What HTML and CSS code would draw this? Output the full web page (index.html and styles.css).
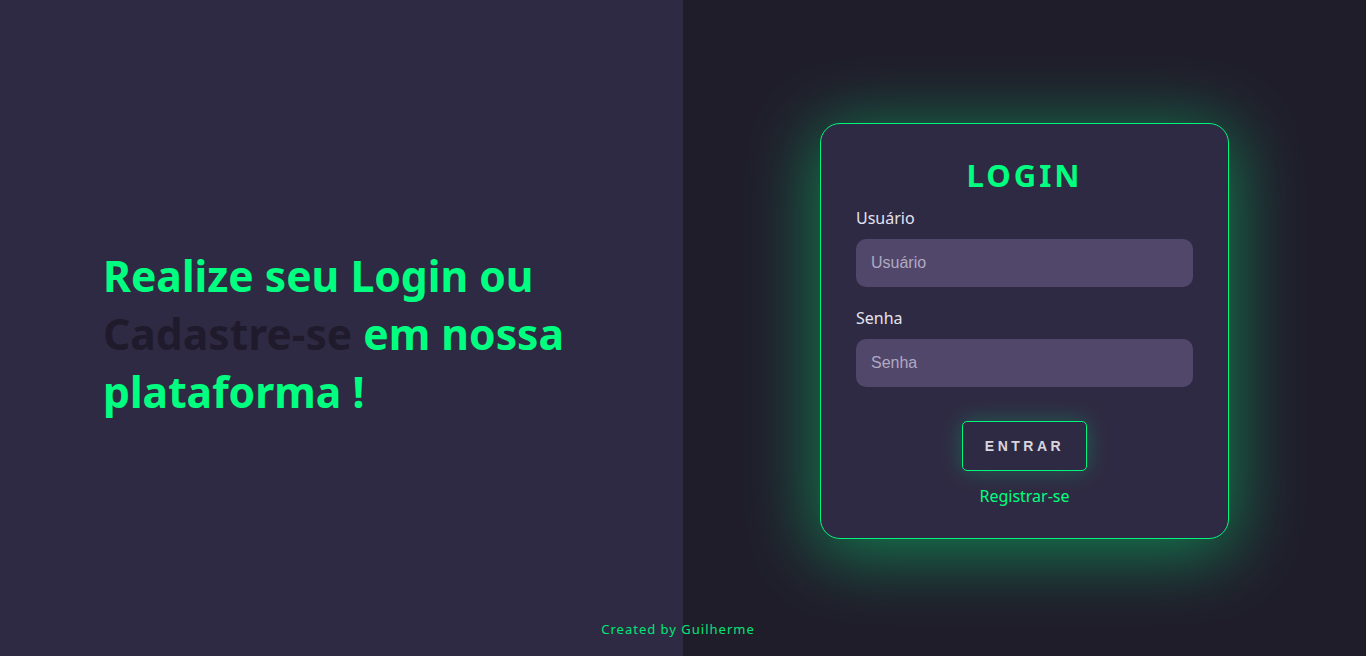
FILE: index.html
```html
<!DOCTYPE html>
<html lang="pt-BR">
<head>
<meta charset="utf-8">
<title>Login</title>
<link rel="stylesheet" href="styles.css">
</head>
<body>
<main class="page">
  <section class="left">
    <h1 class="headline">Realize seu Login ou <span class="dim">Cadastre-se</span> em nossa plataforma !</h1>
  </section>
  <section class="right">
    <form class="card">
      <h2 class="title">LOGIN</h2>
      <label class="label" for="user">Usuário</label>
      <input class="input" id="user" type="text" placeholder="Usuário">
      <label class="label" for="pass">Senha</label>
      <input class="input" id="pass" type="password" placeholder="Senha">
      <button class="btn" type="button">ENTRAR</button>
      <a class="register" href="#">Registrar-se</a>
    </form>
  </section>
  <footer class="footer">Created by Guilherme</footer>
</main>
</body>
</html>
```
FILE: styles.css
```css
* { box-sizing: border-box; }
html, body { margin: 0; height: 100%; }
body { font-family: "Noto Sans", sans-serif; }
.page {
  position: relative;
  display: flex;
  height: 656px;
  width: 100%;
}
.left {
  flex: 0 0 50%;
  min-width: 0;
  background: #2f2a43;
  display: flex;
  align-items: center;
  padding-left: 103px;
}
.headline {
  margin: 0;
  margin-top: 10px;
  font-size: 42.6px;
  line-height: 58px;
  font-weight: 700;
  color: #00ff80;
  max-width: 480px;
}
.dim { color: #1f1b2c; }
.right {
  flex: 0 0 50%;
  min-width: 0;
  background: #201d2b;
  display: flex;
  align-items: center;
  justify-content: center;
}
.card {
  width: 409px;
  height: 416px;
  margin-top: 5px;
  background: #2f2a43;
  border: 1px solid #00f57e;
  border-radius: 20px;
  padding: 30px 35px 0;
  display: flex;
  flex-direction: column;
  box-shadow: 0 10px 70px 6px rgba(0, 255, 128, 0.42);
}
.title {
  margin: 0 0 11px;
  text-align: center;
  font-size: 31px;
  line-height: 42px;
  letter-spacing: 3px;
  font-weight: 700;
  color: #00ff80;
}
.label {
  color: #e4e2ee;
  font-size: 16px;
  line-height: 22px;
  margin-bottom: 10px;
}
.input {
  height: 48px;
  border: none;
  outline: none;
  border-radius: 10px;
  background: #51476a;
  padding: 0 15px;
  font-family: "Liberation Sans", Arial, sans-serif;
  font-size: 16px;
  color: #e4e2ee;
  margin-bottom: 20px;
}
.input::placeholder { color: #b0a9c2; }
.btn {
  align-self: center;
  width: 125px;
  height: 50px;
  margin-top: 14px;
  background: #2f2a43;
  border: 1px solid #00f57e;
  border-radius: 5px;
  color: #d8d5df;
  font-family: "Liberation Sans", Arial, sans-serif;
  font-weight: 700;
  font-size: 14px;
  letter-spacing: 3.5px;
  padding-left: 6px;
  box-shadow: 0 0 22px rgba(0, 220, 115, 0.3);
  cursor: pointer;
}
.register {
  align-self: center;
  margin-top: 14px;
  color: #00ff80;
  text-decoration: none;
  font-size: 16px;
  line-height: 22px;
}
.footer {
  position: absolute;
  left: 0;
  right: 0;
  bottom: 19px;
  padding-right: 10px;
  text-align: center;
  color: #00e676;
  font-size: 13px;
  letter-spacing: 1px;
  line-height: 16px;
}
```
